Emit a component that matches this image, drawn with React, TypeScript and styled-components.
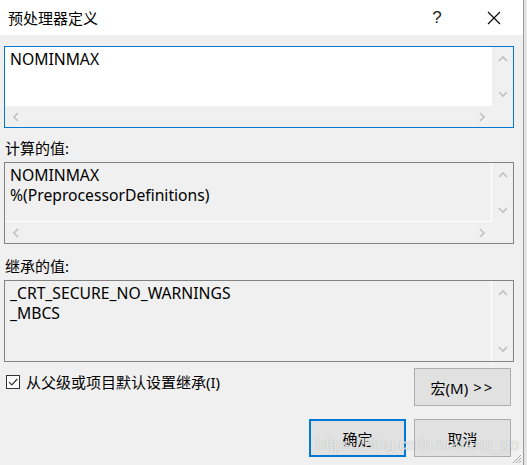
import React from "react";
import styled, { createGlobalStyle } from "styled-components";

const Global = createGlobalStyle`
  html, body { margin: 0; padding: 0; }
  body {
    width: 527px;
    height: 465px;
    overflow: hidden;
    background: #e4e4e4;
    font-family: "Noto Sans", "Noto Sans CJK SC", sans-serif;
    font-size: 15px;
    color: #000;
  }
`;

const Window = styled.div`
  position: relative;
  box-sizing: border-box;
  width: 524px;
  height: 465px;
  border-right: 1px solid #9a9a9a;
  background: #f0f0f0;
  display: flex;
  flex-direction: column;
`;

const TitleBar = styled.div`
  height: 35px;
  background: #fff;
  display: flex;
  align-items: center;
  padding-left: 8px;
  padding-right: 6px;
  flex-shrink: 0;
`;

const Title = styled.div`
  flex: 1;
  font-size: 15px;
  line-height: 20px;
  margin-top: 1px;
`;

const CaptionButton = styled.div<{ $gap?: number }>`
  width: 46px;
  height: 35px;
  display: flex;
  align-items: center;
  justify-content: center;
  margin-right: ${(p) => p.$gap ?? 0}px;
  font-family: "Liberation Sans", sans-serif;
  font-size: 17px;
  color: #222;
`;

const Body = styled.div`
  flex: 1;
  display: flex;
  flex-direction: column;
  padding: 11px 9px 0 4px;
`;

const Label = styled.div<{ $top: number }>`
  line-height: 20px;
  margin-top: ${(p) => p.$top}px;
  margin-bottom: 4px;
  padding-left: 1px;
`;

const Box = styled.div<{ $focused?: boolean; $hscroll?: boolean }>`
  box-sizing: border-box;
  height: 82px;
  border: 1px solid ${(p) => (p.$focused ? "#0078d7" : "#828282")};
  background: #f0f0f0;
  display: grid;
  grid-template-columns: 1fr 21px;
  grid-template-rows: ${(p) => (p.$hscroll ? "1fr 21px" : "1fr")};
`;

const Content = styled.div<{ $white?: boolean; $hscroll?: boolean }>`
  background: ${(p) => (p.$white ? "#fff" : "#f0f0f0")};
  border-right: 1px solid #fff;
  border-bottom: ${(p) => (p.$hscroll ? "1px solid #fff" : "none")};
  padding: 2px 5px;
  font-size: 15.7px;
  line-height: 20px;
  overflow: hidden;
`;

const VScroll = styled.div`
  display: flex;
  flex-direction: column;
  justify-content: space-between;
`;

const HScroll = styled.div`
  display: flex;
  justify-content: space-between;
  align-items: center;
`;

const ArrowCell = styled.div<{ $w: number; $h: number }>`
  width: ${(p) => p.$w}px;
  height: ${(p) => p.$h}px;
  display: flex;
  align-items: center;
  justify-content: center;
`;

const Corner = styled.div``;

const BottomArea = styled.div`
  display: flex;
  flex-direction: column;
  margin-top: 6px;
  padding-right: 3px;
`;

const Row = styled.div`
  display: flex;
  justify-content: space-between;
  align-items: flex-start;
`;

const CheckLabel = styled.label`
  display: flex;
  align-items: center;
  gap: 6px;
  margin-top: 4px;
  margin-left: 2px;
  line-height: 20px;
`;

const CheckBox = styled.span`
  box-sizing: border-box;
  width: 14px;
  height: 14px;
  border: 1px solid #333;
  background: #fff;
  display: flex;
  align-items: center;
  justify-content: center;
`;

const ButtonRow = styled.div`
  display: flex;
  justify-content: flex-end;
  gap: 8px;
  margin-top: 13px;
`;

const Button = styled.button<{ $primary?: boolean }>`
  box-sizing: border-box;
  width: 97px;
  height: 38px;
  background: #e1e1e1;
  border: ${(p) => (p.$primary ? "2px solid #0078d7" : "1px solid #adadad")};
  font-family: "Noto Sans", "Noto Sans CJK SC", sans-serif;
  font-size: 15px;
  color: #000;
  padding: 0;
  display: flex;
  align-items: center;
  justify-content: center;
`;

const Arrows = styled.span`
  letter-spacing: 2px;
  margin-left: 5px;
`;

const Watermark = styled.div`
  position: absolute;
  left: 316px;
  top: 437px;
  font-family: "Liberation Sans", sans-serif;
  font-size: 16px;
  line-height: 16px;
  color: rgba(255, 255, 255, 0.8);
  text-shadow: 0 0 1px rgba(90, 90, 90, 0.55);
  white-space: nowrap;
  pointer-events: none;
`;

const Grip = styled.svg`
  position: absolute;
  right: 1px;
  bottom: 1px;
`;

type Dir = "up" | "down" | "left" | "right";

const Chevron: React.FC<{ dir: Dir }> = ({ dir }) => {
  const paths: Record<Dir, string> = {
    up: "M1 6 L5 2 L9 6",
    down: "M1 2 L5 6 L9 2",
    left: "M6 1 L2 5 L6 9",
    right: "M2 1 L6 5 L2 9",
  };
  const vertical = dir === "up" || dir === "down";
  return (
    <svg width={vertical ? 10 : 8} height={vertical ? 8 : 10} viewBox={vertical ? "0 0 10 8" : "0 0 8 10"}>
      <path d={paths[dir]} fill="none" stroke="#c0c0c0" strokeWidth="1.6" />
    </svg>
  );
};

const TextBox: React.FC<{ lines: string[]; focused?: boolean; hscroll?: boolean }> = ({
  lines,
  focused,
  hscroll,
}) => (
  <Box $focused={focused} $hscroll={hscroll}>
    <Content $white={focused} $hscroll={hscroll && !focused}>
      {lines.map((l) => (
        <div key={l}>{l}</div>
      ))}
    </Content>
    <VScroll>
      <ArrowCell $w={21} $h={24}>
        <Chevron dir="up" />
      </ArrowCell>
      <ArrowCell $w={21} $h={24}>
        <Chevron dir="down" />
      </ArrowCell>
    </VScroll>
    {hscroll && (
      <>
        <HScroll>
          <ArrowCell $w={21} $h={21}>
            <Chevron dir="left" />
          </ArrowCell>
          <ArrowCell $w={21} $h={21}>
            <Chevron dir="right" />
          </ArrowCell>
        </HScroll>
        <Corner />
      </>
    )}
  </Box>
);

export default function App() {
  return (
    <>
      <Global />
      <Window>
        <TitleBar>
          <Title>预处理器定义</Title>
          <CaptionButton $gap={11}>?</CaptionButton>
          <CaptionButton>
            <svg width="14" height="14" viewBox="0 0 14 14">
              <path d="M1 1 L13 13 M13 1 L1 13" stroke="#000" strokeWidth="1.1" fill="none" />
            </svg>
          </CaptionButton>
        </TitleBar>
        <Body>
          <TextBox focused hscroll lines={["NOMINMAX"]} />
          <Label $top={10}>计算的值:</Label>
          <TextBox hscroll lines={["NOMINMAX", "%(PreprocessorDefinitions)"]} />
          <Label $top={12}>继承的值:</Label>
          <TextBox lines={["_CRT_SECURE_NO_WARNINGS", "_MBCS"]} />
          <BottomArea>
            <Row>
              <CheckLabel>
                <CheckBox>
                  <svg width="12" height="12" viewBox="0 0 12 12">
                    <path d="M2 6.2 L4.8 9 L10.2 3" fill="none" stroke="#333" strokeWidth="1.2" />
                  </svg>
                </CheckBox>
                从父级或项目默认设置继承(I)
              </CheckLabel>
              <Button>
                宏(M)<Arrows>&gt;&gt;</Arrows>
              </Button>
            </Row>
            <ButtonRow>
              <Button $primary>确定</Button>
              <Button>取消</Button>
            </ButtonRow>
          </BottomArea>
        </Body>
        <Watermark>https://blog.csdn.net/Ang_go</Watermark>
        <Grip width="11" height="11" viewBox="0 0 11 11">
          <path d="M10 2 L2 10 M10 5 L5 10 M10 8 L8 10" stroke="#a8a8a8" strokeWidth="1" />
        </Grip>
      </Window>
    </>
  );
}
